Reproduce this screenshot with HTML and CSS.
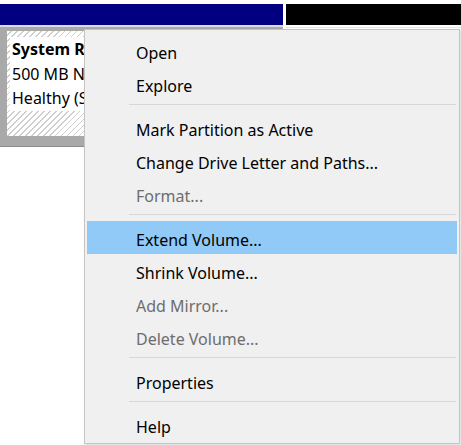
FILE: index.html
```html
<!DOCTYPE html>
<html>
<head>
<meta charset="utf-8">
<link rel="stylesheet" href="styles.css">
</head>
<body>
<div class="disk">
  <div class="headers">
    <div class="hdr hdr-sys"></div>
    <div class="hdr hdr-unalloc"></div>
  </div>
  <div class="parts">
    <div class="part">
      <div class="hatch">
        <div class="label">
          <span class="name">System Reserved</span>
          <span class="line">500 MB NTFS</span>
          <span class="line">Healthy (System, Active, Primary Partition)</span>
        </div>
      </div>
    </div>
    <div class="part-right"></div>
  </div>
</div>

<div class="menu">
  <div class="item">Open</div>
  <div class="item">Explore</div>
  <div class="sep"></div>
  <div class="item">Mark Partition as Active</div>
  <div class="item">Change Drive Letter and Paths...</div>
  <div class="item disabled">Format...</div>
  <div class="sep"></div>
  <div class="item active">Extend Volume...</div>
  <div class="item">Shrink Volume...</div>
  <div class="item disabled">Add Mirror...</div>
  <div class="item disabled">Delete Volume...</div>
  <div class="sep"></div>
  <div class="item">Properties</div>
  <div class="sep"></div>
  <div class="item">Help</div>
</div>
</body>
</html>
```

FILE: styles.css
```css
html, body {
  margin: 0;
  padding: 0;
  background: #ffffff;
  width: 461px;
  height: 445px;
  overflow: hidden;
  font-family: "Noto Sans", "Open Sans", sans-serif;
  font-size: 16px;
}

body {
  position: relative;
}

.disk {
  padding-top: 4px;
}

.headers {
  display: flex;
  gap: 3px;
  height: 21px;
}

.hdr-sys {
  width: 283px;
  background: #000080;
}

.hdr-unalloc {
  flex: 1;
  background: #000000;
}

.parts {
  display: flex;
  gap: 3px;
}

.part {
  width: 283px;
  box-sizing: border-box;
  background: #a9a9a9;
  border-top: 2px solid #dcdcdc;
  border-bottom: 1px solid #8c8c8c;
  padding: 4px 3px 10px 7px;
}

.hatch {
  height: 105px;
  background: repeating-linear-gradient(-45deg, #ffffff 0px, #ffffff 3px, #cfcfcf 3px, #cfcfcf 4.2px);
  padding: 6px 0 0 3px;
  box-sizing: border-box;
}

.label {
  background: #ffffff;
  padding-left: 2px;
  line-height: 24.5px;
  white-space: nowrap;
  overflow: hidden;
}

.label span {
  display: block;
}

.name {
  font-weight: bold;
}

.part-right {
  flex: 1;
  border-top: 1px solid #e6e6e6;
  margin-top: 2px;
}

.menu {
  position: absolute;
  left: 84px;
  top: 29px;
  width: 376px;
  box-sizing: border-box;
  background: #f0f0f0;
  border: 1px solid #c4c4c4;
  padding: 4px 2px 2px 2px;
  box-shadow: 1px 1px 2px rgba(0, 0, 0, 0.15);
}

.item {
  height: 33px;
  box-sizing: border-box;
  padding-top: 5px;
  line-height: 28px;
  padding-left: 49px;
  color: #000000;
  white-space: nowrap;
}

.item.disabled {
  color: #6d6d6d;
}

.item.active {
  background: #91c9f7;
}

.sep {
  height: 1px;
  background: #d7d7d7;
  margin: 4px 1px 6px 42px;
}
```
